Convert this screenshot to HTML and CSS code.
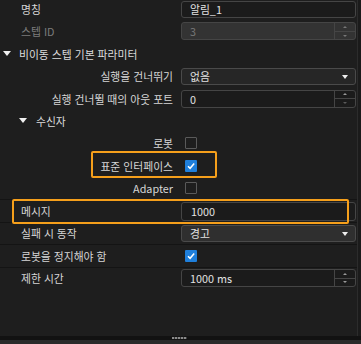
FILE: index.html
```html
<!DOCTYPE html>
<html lang="ko">
<head>
    <meta charset="UTF-8">
    <meta name="viewport" content="width=device-width, initial-scale=1.0">
    <title>속성</title>
    <link rel="stylesheet" href="styles.css">
</head>
<body>
    <div class="app">
        <div class="main">
            <div class="panel">
                <div class="props">
                    <div class="row">
                        <div class="label">명칭</div>
                        <div class="field"><div class="input">알림_1</div></div>
                    </div>
                    <div class="row">
                        <div class="label disabled">스텝 ID</div>
                        <div class="field">
                            <div class="input spin is-disabled">
                                <span class="spin-text">3</span>
                                <span class="spin-btns"><span class="up"></span><span class="down"></span></span>
                            </div>
                        </div>
                    </div>
                    <div class="row group">
                        <span class="caret"></span><span>비이동 스텝 기본 파라미터</span>
                    </div>
                    <div class="row">
                        <div class="label sub">실행을 건너뛰기</div>
                        <div class="field"><div class="input combo">없음<span class="arrow"></span></div></div>
                    </div>
                    <div class="row">
                        <div class="label sub">실행 건너뛸 때의 아웃 포트</div>
                        <div class="field">
                            <div class="input spin">
                                <span class="spin-text">0</span>
                                <span class="spin-btns"><span class="up"></span><span class="down off"></span></span>
                            </div>
                        </div>
                    </div>
                    <div class="row group inner">
                        <span class="caret"></span><span>수신자</span>
                    </div>
                    <div class="row">
                        <div class="label sub">로봇</div>
                        <div class="field"><span class="check"></span></div>
                    </div>
                    <div class="row">
                        <div class="label sub">표준 인터페이스</div>
                        <div class="field"><span class="check on"><svg width="12" height="12" viewBox="0 0 12 12"><polyline points="3,6.2 5.1,8.3 9.2,3.6" fill="none" stroke="#fff" stroke-width="1.5"/></svg></span></div>
                    </div>
                    <div class="row">
                        <div class="label sub">Adapter</div>
                        <div class="field"><span class="check"></span></div>
                    </div>
                    <div class="row lined">
                        <div class="label">메시지</div>
                        <div class="field"><div class="input tall">1000</div></div>
                    </div>
                    <div class="row lined">
                        <div class="label">실패 시 동작</div>
                        <div class="field"><div class="input combo light">경고<span class="arrow"></span></div></div>
                    </div>
                    <div class="row lined">
                        <div class="label">로봇을 정지해야 함</div>
                        <div class="field"><span class="check on"><svg width="12" height="12" viewBox="0 0 12 12"><polyline points="3,6.2 5.1,8.3 9.2,3.6" fill="none" stroke="#fff" stroke-width="1.5"/></svg></span></div>
                    </div>
                    <div class="row lined">
                        <div class="label">제한 시간</div>
                        <div class="field">
                            <div class="input spin">
                                <span class="spin-text">1000 ms</span>
                                <span class="spin-btns"><span class="up"></span><span class="down"></span></span>
                            </div>
                        </div>
                    </div>
                </div>
            </div>
            <div class="scroll"></div>
        </div>
        <div class="footer"><span class="grip"></span></div>

        <!-- highlight marks -->
        <div class="mark mark-iface"></div>
        <div class="mark mark-msg"></div>
    </div>
</body>
</html>
```

FILE: styles.css
```css
body {
    margin: 0;
    background-color: #1e1e1e;
    font-family: "Noto Sans CJK KR", "Noto Sans", sans-serif;
    font-size: 10.8px;
    color: #d6d6d6;
}
.app {
    position: relative;
    width: 361px;
    height: 344px;
    display: flex;
    flex-direction: column;
    overflow: hidden;
}
.main {
    flex: 1;
    display: flex;
    min-height: 0;
}
.panel {
    width: 357px;
    overflow: hidden;
}
.scroll {
    flex: 1;
    border-left: 1px solid #2c2c2c;
    background-color: #1b1b1b;
}
.props {
    margin-top: -2.2px;
}
.row {
    height: 22.4px;
    display: grid;
    grid-template-columns: 181px 175px;
    align-items: center;
    box-sizing: border-box;
}
.row.lined {
    border-top: 1px solid #141414;
}
.label {
    padding-left: 21px;
    white-space: nowrap;
}
.label.sub {
    text-align: right;
    padding-left: 0;
    padding-right: 8px;
}
.label.disabled {
    color: #7c7c7c;
}
.field {
    display: flex;
    align-items: center;
}
.input {
    width: 175px;
    height: 17px;
    box-sizing: border-box;
    border: 1px solid #454545;
    border-radius: 3px;
    background-color: #1b1b1b;
    color: #e2e2e2;
    padding-left: 8px;
    display: flex;
    align-items: center;
}
.input.tall {
    height: 19px;
    padding-left: 9px;
}
.input.is-disabled {
    background-color: #333333;
    color: #787878;
}
.combo {
    position: relative;
    background-color: #262626;
    border-color: #4a4a4a;
}
.combo.light {
    background-color: #2f2f2f;
}
.arrow {
    position: absolute;
    right: 7px;
    top: 6px;
    width: 0;
    height: 0;
    border-left: 3.5px solid transparent;
    border-right: 3.5px solid transparent;
    border-top: 4px solid #eeeeee;
}
.spin {
    padding-right: 0;
    height: 18px;
}
.spin-text {
    flex: 1;
}
.spin-btns {
    width: 20px;
    height: 100%;
    border-left: 1px solid #454545;
    display: flex;
    flex-direction: column;
}
.spin-btns span {
    flex: 1;
    display: flex;
    align-items: center;
    justify-content: center;
}
.spin-btns .up {
    border-bottom: 1px solid #454545;
}
.spin-btns .up::after,
.spin-btns .down::after {
    content: "";
    width: 0;
    height: 0;
    border-left: 2.5px solid transparent;
    border-right: 2.5px solid transparent;
}
.spin-btns .up::after {
    border-bottom: 2px solid #9a9a9a;
}
.spin-btns .down::after {
    border-top: 2px solid #9a9a9a;
}
.spin-btns .down.off::after {
    border-top-color: #5a5a5a;
}
.is-disabled .spin-btns .up::after {
    border-bottom-color: #777;
}
.is-disabled .spin-btns .down::after {
    border-top-color: #777;
}
.group {
    display: flex;
    align-items: center;
    color: #dcdcdc;
}
.caret {
    width: 0;
    height: 0;
    margin-left: 3px;
    margin-right: 8px;
    border-left: 4px solid transparent;
    border-right: 4px solid transparent;
    border-top: 5px solid #f0f0f0;
}
.group.inner .caret {
    margin-left: 19px;
    margin-right: 9px;
}
.check {
    width: 12px;
    height: 12px;
    margin-left: 4px;
    box-sizing: border-box;
    border: 1px solid #5a5a5a;
    border-radius: 1px;
}
.check.on {
    border: none;
    background-color: #1f7fdb;
}
.check svg {
    display: block;
}
.footer {
    height: 8px;
    background-color: #2a2a2a;
    border-top: 4px solid #121212;
    box-sizing: border-box;
    position: relative;
}
.grip {
    position: absolute;
    left: 172px;
    top: -3px;
    width: 15px;
    height: 2px;
    background: repeating-linear-gradient(90deg, #8a8a8a 0 2px, #3a3a3a 2px 3px);
}
.mark {
    position: absolute;
    border: 2px solid #f59f1b;
    border-radius: 2px;
    box-sizing: border-box;
}
.mark-iface {
    left: 91px;
    top: 151px;
    width: 126px;
    height: 27px;
}
.mark-msg {
    left: 12px;
    top: 199px;
    width: 337px;
    height: 25px;
}
```
